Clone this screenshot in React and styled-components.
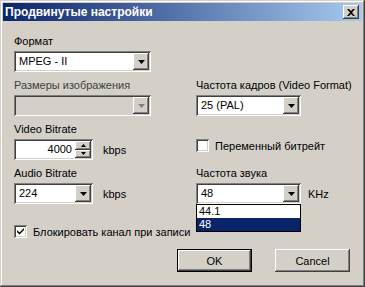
import React from "react";
import styled, { createGlobalStyle, css } from "styled-components";

const GlobalStyle = createGlobalStyle`
  html, body {
    margin: 0;
    padding: 0;
    background: #d4d0c8;
  }
  body {
    font-family: "Liberation Sans", Arial, sans-serif;
    font-size: 11px;
    color: #000;
  }
`;

// classic win9x bevels
const raised = css`
  box-shadow: inset -1px -1px #404040, inset 1px 1px #fff,
    inset -2px -2px #808080, inset 2px 2px #d4d0c8;
`;

const sunken = css`
  box-shadow: inset 1px 1px #808080, inset -1px -1px #fff,
    inset 2px 2px #404040, inset -2px -2px #d4d0c8;
`;

const Window = styled.div`
  box-sizing: border-box;
  width: 365px;
  height: 287px;
  padding: 3px;
  background: #d4d0c8;
  box-shadow: inset -1px -1px #404040, inset 1px 1px #d4d0c8,
    inset -2px -2px #808080, inset 2px 2px #fff;
  display: flex;
  flex-direction: column;
`;

const TitleBar = styled.div`
  height: 18px;
  display: flex;
  align-items: center;
  justify-content: space-between;
  padding: 0 3px 0 2px;
  background: linear-gradient(to right, #0a246a, #a6caf0);
  color: #fff;
  font-weight: bold;
  font-size: 12px;
`;

const CloseButton = styled.div`
  width: 16px;
  height: 14px;
  background: #d4d0c8;
  display: flex;
  align-items: center;
  justify-content: center;
  ${raised};
`;

const Body = styled.div`
  display: flex;
  flex-direction: column;
  padding: 14px 12px 0 11px;
`;

const Row = styled.div`
  display: grid;
  grid-template-columns: 182px 1fr;
  margin-top: ${(p) => p.$gap || 0}px;
`;

const Field = styled.div`
  display: flex;
  flex-direction: column;
  gap: 3px;
  padding-top: ${(p) => p.$top || 0}px;
`;

const Label = styled.div`
  height: 13px;
  line-height: 13px;
  white-space: nowrap;
  color: ${(p) => (p.$muted ? "#404040" : "#000")};
`;

const Line = styled.div`
  display: flex;
  align-items: center;
  gap: ${(p) => p.$gap || 10}px;
`;

const Combo = styled.div`
  position: relative;
  box-sizing: border-box;
  width: ${(p) => p.$w}px;
  height: 21px;
  padding: 2px;
  display: flex;
  align-items: stretch;
  background: ${(p) => (p.$disabled ? "#d4d0c8" : "#fff")};
  ${sunken};
`;

const ComboText = styled.div`
  flex: 1;
  padding: 0 3px;
  line-height: 17px;
  text-align: ${(p) => (p.$right ? "right" : "left")};
`;

const ArrowButton = styled.div`
  width: 16px;
  background: #d4d0c8;
  display: flex;
  align-items: center;
  justify-content: center;
  ${raised};
`;

const Spinner = styled.div`
  width: 16px;
  display: flex;
  flex-direction: column;
`;

const SpinHalf = styled.div`
  flex: 1;
  background: #d4d0c8;
  display: flex;
  align-items: center;
  justify-content: center;
  ${raised};
`;

const DropList = styled.div`
  position: absolute;
  left: 0;
  top: 100%;
  box-sizing: border-box;
  width: 105px;
  border: 1px solid #000;
  background: #fff;
  z-index: 2;
`;

const ListItem = styled.div`
  height: 13px;
  line-height: 13px;
  padding: 0 2px;
  background: ${(p) => (p.$selected ? "#0a246a" : "#fff")};
  color: ${(p) => (p.$selected ? "#fff" : "#000")};
`;

const Check = styled.div`
  display: flex;
  align-items: center;
  gap: 6px;
  white-space: nowrap;
`;

const CheckBox = styled.div`
  box-sizing: border-box;
  width: 13px;
  height: 13px;
  background: #fff;
  display: flex;
  align-items: center;
  justify-content: center;
  ${sunken};
`;

const Buttons = styled.div`
  display: flex;
  justify-content: flex-end;
  gap: 23px;
  margin-top: 11px;
`;

const Button = styled.div`
  box-sizing: border-box;
  width: 75px;
  height: 23px;
  display: flex;
  align-items: center;
  justify-content: center;
  background: #d4d0c8;
  ${raised};
  ${(p) =>
    p.$default &&
    css`
      border: 1px solid #000;
    `}
`;

const Arrow = ({ disabled }) => (
  <svg width="7" height="4" viewBox="0 0 7 4">
    <path d="M0 0h7L3.5 4z" fill={disabled ? "#808080" : "#000"} />
  </svg>
);

const SmallArrow = ({ up }) => (
  <svg width="5" height="3" viewBox="0 0 5 3">
    <path d={up ? "M2.5 0L5 3H0z" : "M0 0h5L2.5 3z"} fill="#000" />
  </svg>
);

const ComboBox = ({ w, value, disabled, children }) => (
  <Combo $w={w} $disabled={disabled}>
    <ComboText>{value}</ComboText>
    <ArrowButton>
      <Arrow disabled={disabled} />
    </ArrowButton>
    {children}
  </Combo>
);

const CheckField = ({ checked, label }) => (
  <Check>
    <CheckBox>
      {checked && (
        <svg width="7" height="7" viewBox="0 0 7 7">
          <path d="M0 2l2.5 2.5L7 0v2L2.5 6.5 0 4z" fill="#000" />
        </svg>
      )}
    </CheckBox>
    <span>{label}</span>
  </Check>
);

const App = () => {
  return (
    <>
      <GlobalStyle />
      <Window>
        <TitleBar>
          <span>Продвинутые настройки</span>
          <CloseButton>
            <svg width="8" height="7" viewBox="0 0 8 7">
              <path
                d="M0 0h2l2 2 2-2h2L5 3.5 8 7H6L4 5 2 7H0l3-3.5z"
                fill="#000"
              />
            </svg>
          </CloseButton>
        </TitleBar>
        <Body>
          <Row>
            <Field>
              <Label>Формат</Label>
              <ComboBox w={137} value="MPEG - II" />
            </Field>
          </Row>
          <Row $gap={7}>
            <Field>
              <Label $muted>Размеры изображения</Label>
              <ComboBox w={137} value="" disabled />
            </Field>
            <Field>
              <Label>Частота кадров (Video Format)</Label>
              <ComboBox w={105} value="25 (PAL)" />
            </Field>
          </Row>
          <Row $gap={7}>
            <Field>
              <Label>Video Bitrate</Label>
              <Line>
                <Combo $w={79}>
                  <ComboText $right>4000</ComboText>
                  <Spinner>
                    <SpinHalf>
                      <SmallArrow up />
                    </SpinHalf>
                    <SpinHalf>
                      <SmallArrow />
                    </SpinHalf>
                  </Spinner>
                </Combo>
                <span>kbps</span>
              </Line>
            </Field>
            <Field $top={16}>
              <CheckField label="Переменный битрейт" />
            </Field>
          </Row>
          <Row $gap={7}>
            <Field>
              <Label>Audio Bitrate</Label>
              <Line>
                <ComboBox w={79} value="224" />
                <span>kbps</span>
              </Line>
            </Field>
            <Field>
              <Label>Частота звука</Label>
              <Line $gap={7}>
                <ComboBox w={105} value="48">
                  <DropList>
                    <ListItem>44.1</ListItem>
                    <ListItem $selected>48</ListItem>
                  </DropList>
                </ComboBox>
                <span>KHz</span>
              </Line>
            </Field>
          </Row>
          <Row $gap={21}>
            <CheckField checked label="Блокировать канал при записи" />
          </Row>
          <Buttons>
            <Button $default>OK</Button>
            <Button>Cancel</Button>
          </Buttons>
        </Body>
      </Window>
    </>
  );
};

export default App;
